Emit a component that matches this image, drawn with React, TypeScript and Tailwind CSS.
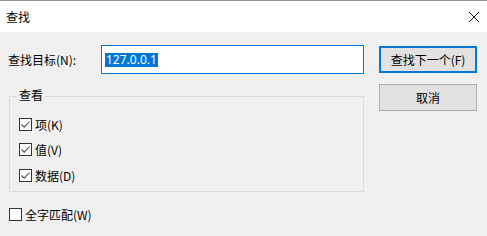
import React from "react";

const font = { fontFamily: '"Noto Sans CJK SC", "Noto Sans", sans-serif' };

function Check({ checked }: { checked: boolean }) {
  return (
    <span className="w-[13px] h-[13px] border border-[#333333] bg-white flex items-center justify-center shrink-0">
      {checked && (
        <svg width="11" height="11" viewBox="0 0 11 11">
          <path d="M1.5 5.5 L4.2 8.2 L9.5 2.5" fill="none" stroke="#4a4a4a" strokeWidth="1.1" />
        </svg>
      )}
    </span>
  );
}

function Row({ label, checked, className }: { label: string; checked: boolean; className?: string }) {
  return (
    <div className={"flex items-center gap-[3px] h-[13px] " + (className ?? "")}>
      <Check checked={checked} />
      <span className="text-[12px] leading-none text-black">{label}</span>
    </div>
  );
}

export default function App() {
  return (
    <div className="w-[487px] h-[236px] bg-[#f0f0f0] overflow-hidden flex flex-col" style={font}>
      <div className="h-px bg-[#8c8c8c] shrink-0" />
      <div className="h-[31px] bg-white flex items-center justify-between pl-[6px] pr-[6px] shrink-0">
        <span className="text-[12px] text-black leading-none">查找</span>
        <svg width="12" height="12" viewBox="0 0 12 12" className="mr-[1px]">
          <path d="M1 1 L11 11 M11 1 L1 11" stroke="#111" strokeWidth="1" />
        </svg>
      </div>
      <div className="flex pl-[8px]">
        <div className="w-[356px] flex flex-col">
          <div className="mt-[13px] h-[29px] flex items-center">
            <span className="w-[93px] text-[12px] text-black leading-none">查找目标(N):</span>
            <div className="w-[263px] h-[29px] border border-[#0078d7] bg-white flex items-center pl-[3px]">
              <span className="bg-[#0078d7] text-white text-[12px] leading-[14px] px-px" style={{ fontFamily: '"Noto Sans", sans-serif' }}>127.0.0.1</span>
            </div>
          </div>
          <div className="relative mt-[22px] ml-px w-[355px] h-[96px] border border-[#dcdcdc] flex flex-col pl-[9px] pt-[21px]">
            <span className="absolute -top-[8px] left-[7px] bg-[#f0f0f0] px-[2px] text-[12px] leading-none text-black">查看</span>
            <Row label="项(K)" checked />
            <Row label="值(V)" checked className="mt-[12px]" />
            <Row label="数据(D)" checked className="mt-[13px]" />
          </div>
          <Row label="全字匹配(W)" checked={false} className="mt-[16px] ml-px" />
        </div>
        <div className="ml-[15px] w-[98px] flex flex-col">
          <button className="mt-[14px] h-[27px] border-2 border-[#0078d7] bg-[#e1e1e1] text-[12px] text-black flex items-center justify-center leading-none">
            查找下一个(F)
          </button>
          <button className="mt-[11px] h-[27px] border border-[#adadad] bg-[#e1e1e1] text-[12px] text-black flex items-center justify-center leading-none">
            取消
          </button>
        </div>
      </div>
    </div>
  );
}
